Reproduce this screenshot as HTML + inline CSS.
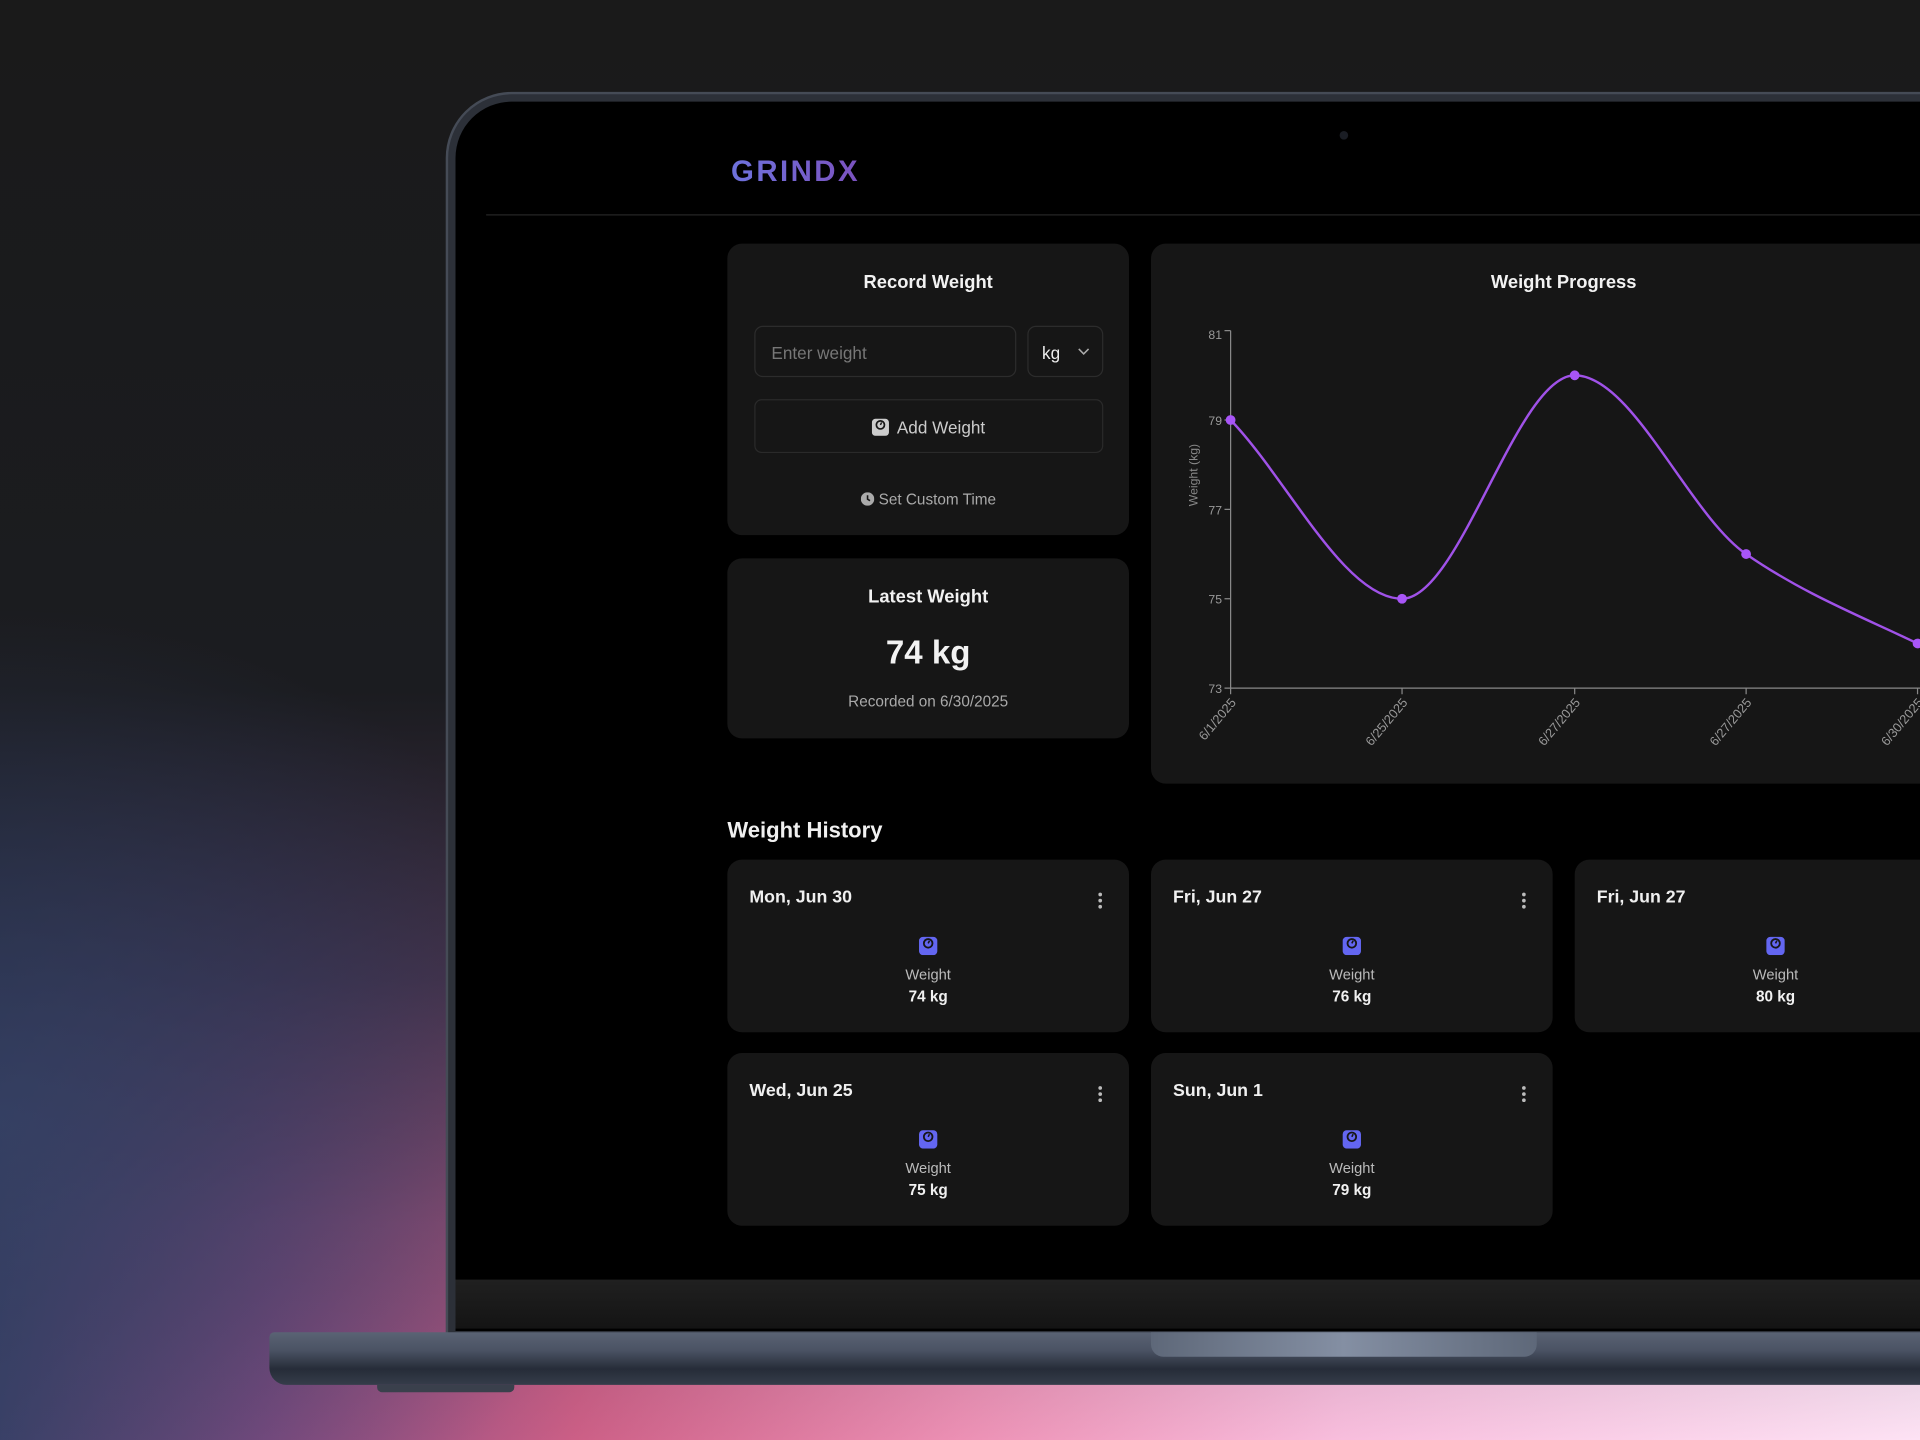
<!DOCTYPE html>
<html><head><meta charset="utf-8"><style>
*{margin:0;padding:0;box-sizing:border-box}
html,body{width:1920px;height:1440px;overflow:hidden;background:#1a1a1a;font-family:"Liberation Sans",sans-serif}
#w{position:absolute;left:0;top:0;width:1568px;height:1176px;transform:scale(1.22449);transform-origin:0 0;overflow:hidden;
background:radial-gradient(ellipse 500px 420px at 0% 78%,rgba(55,68,105,0.75),rgba(55,68,105,0)),linear-gradient(180deg,#1a1a1a 0%,#1b1c20 48%,rgba(30,34,50,0.75) 68%,rgba(30,34,50,0.25) 85%,rgba(30,32,48,0) 100%),linear-gradient(90deg,#3a3f66 0%,#7e4a80 14%,#cc5f86 30%,#ec90b4 50%,#f8bedd 70%,#fde2f4 100%)}
.a{position:absolute}
.card{position:absolute;background:#161616;border-radius:12px}
.t{position:absolute;color:#f2f2f2;font-weight:bold;text-align:center}
.hc .d{position:absolute;left:18px;top:23px;color:#f0f0f0;font-weight:bold;font-size:14.5px}
.hc .k{position:absolute;left:303px;top:27px;width:4px}
.hc .k i{display:block;width:3px;height:3px;border-radius:50%;background:#bbb;margin-bottom:2px}
.hc .ic{position:absolute;left:156px;top:62px}
.hc .l{position:absolute;left:0;width:100%;top:87px;text-align:center;color:#bbb;font-size:12px}
.hc .v{position:absolute;left:0;width:100%;top:105px;text-align:center;color:#f0f0f0;font-size:12.5px;font-weight:bold}
</style></head><body><div id="w">
<div class="a" style="left:364px;top:75px;width:1300px;height:1016px;border-radius:54px 54px 0 0;background:#2c3038;border:2px solid #454b56"></div>
<div class="a" style="left:372px;top:83px;width:1290px;height:1004px;border-radius:46px 46px 0 0;background:#000"></div>
<div class="a" style="left:372px;top:1045px;width:1290px;height:40px;background:linear-gradient(#202020,#141414)"></div>
<div class="a" style="left:1094px;top:107px;width:7px;height:7px;border-radius:50%;background:#1a1d24"></div>
<div class="a" style="left:220px;top:1088px;width:1400px;height:43px;border-radius:4px 0 0 14px;background:linear-gradient(180deg,#5a6374 0%,#4a5263 35%,#262c38 70%,#353c4a 100%)"></div>
<div class="a" style="left:940px;top:1088px;width:315px;height:20px;border-radius:0 0 10px 10px;background:linear-gradient(90deg,#5e6879,#848fa3 50%,#5e6879)"></div>
<div class="a" style="left:308px;top:1131px;width:112px;height:6px;background:#3a404c;border-radius:0 0 4px 4px"></div>
<div class="a" style="left:597px;top:127px;font-size:24px;font-weight:bold;letter-spacing:2px;background:linear-gradient(90deg,#6e72dc,#7b52bf);-webkit-background-clip:text;background-clip:text;color:transparent">GRINDX</div>
<div class="a" style="left:397px;top:175px;width:1200px;height:1px;background:#262626"></div>
<div class="card" style="left:594px;top:199px;width:328px;height:238px">
<div class="t" style="left:0;width:100%;top:23px;font-size:15px">Record Weight</div>
<div class="a" style="left:22px;top:67px;width:214px;height:42px;border:1px solid #2c2c2c;border-radius:7px;color:#777;font-size:14px;padding:13px 0 0 13px">Enter weight</div>
<div class="a" style="left:245px;top:67px;width:62px;height:42px;border:1px solid #2c2c2c;border-radius:7px;color:#eee;font-size:14px;padding:13px 0 0 11px">kg<svg style="position:absolute;left:40px;top:17px" width="10" height="6" viewBox="0 0 10 6"><path d="M1 1l4 4 4-4" fill="none" stroke="#aaa" stroke-width="1.3"/></svg></div>
<div class="a" style="left:22px;top:127px;width:285px;height:44px;border:1px solid #2a2a2a;border-radius:6px;color:#ccc;font-size:14px;text-align:center;padding-top:14px"><svg style="vertical-align:-2px;margin-right:6px" width="14" height="15" viewBox="0 0 14 15"><rect x="0" y="1" width="14" height="14" rx="3" fill="#ccc"/><circle cx="7" cy="6" r="4" fill="#161616"/><circle cx="7" cy="6" r="2.6" fill="#ccc"/><path d="M7 6l1-2" stroke="#161616" stroke-width="1.2"/></svg>Add Weight</div>
<div class="a" style="left:0;width:100%;top:202px;text-align:center;color:#aaa;font-size:12.5px"><svg style="vertical-align:-1px;margin-right:4px" width="11" height="11" viewBox="0 0 11 11"><circle cx="5.5" cy="5.5" r="5.5" fill="#aaa"/><path d="M5.5 2.5v3.2l2 1.2" stroke="#161616" stroke-width="1.3" fill="none"/></svg>Set Custom Time</div>
</div>
<div class="card" style="left:594px;top:456px;width:328px;height:147px">
<div class="t" style="left:0;width:100%;top:23px;font-size:15px">Latest Weight</div>
<div class="t" style="left:0;width:100%;top:62px;font-size:27px">74 kg</div>
<div class="a" style="left:0;width:100%;top:110px;text-align:center;color:#aaa;font-size:12.5px">Recorded on 6/30/2025</div>
</div>
<div class="card" style="left:940px;top:199px;width:680px;height:441px">
<div class="t" style="left:0;width:674px;top:23px;font-size:15px">Weight Progress</div>
</div>
<svg class="a" style="left:0;top:0" width="1568" height="1176" font-family="Liberation Sans,sans-serif">
<g stroke="#888" stroke-width="1" fill="none">
<path d="M1005 270V562H1568"/>
<path d="M1000 270h5M1000 343h5M1000 416h5M1000 489h5M1000 562h5M1005 562v5M1145 562v5M1286 562v5M1426 562v5M1566 562v5"/>
</g>
<g fill="#999" font-size="10" text-anchor="end">
<text x="998" y="277">81</text><text x="998" y="347">79</text><text x="998" y="420">77</text><text x="998" y="493">75</text><text x="998" y="566">73</text>
</g>
<text x="0" y="0" fill="#888" font-size="10" text-anchor="middle" transform="translate(978 388) rotate(-90)">Weight (kg)</text>
<g fill="#999" font-size="10.5" text-anchor="end">
<text transform="translate(1010 574) rotate(-50)">6/1/2025</text>
<text transform="translate(1150 574) rotate(-50)">6/25/2025</text>
<text transform="translate(1291 574) rotate(-50)">6/27/2025</text>
<text transform="translate(1431 574) rotate(-50)">6/27/2025</text>
<text transform="translate(1571 574) rotate(-50)">6/30/2025</text>
</g>
<path d="M1005,343 C1052,392 1098,489 1145,489 C1192,489 1239,306.5 1286,306.5 C1333,306.5 1379,420 1426,452.5 C1473,485 1519,503 1566,525.5" fill="none" stroke="#a052e8" stroke-width="2"/>
<g fill="#a855f7"><circle cx="1005" cy="343" r="4"/><circle cx="1145" cy="489" r="4"/><circle cx="1286" cy="306.5" r="4"/><circle cx="1426" cy="452.5" r="4"/><circle cx="1566" cy="525.5" r="4"/></g>
</svg>
<div class="a" style="left:594px;top:668px;color:#f0f0f0;font-size:18px;font-weight:bold">Weight History</div>
<div class="card hc" style="left:594px;top:702px;width:328px;height:141px"><div class="d">Mon, Jun 30</div><div class="k"><i></i><i></i><i></i></div><svg class="ic" width="16" height="16" viewBox="0 0 14 15"><rect x="0" y="1" width="14" height="14" rx="3" fill="#6366f1"/><circle cx="7" cy="6" r="4" fill="#161616"/><circle cx="7" cy="6" r="2.6" fill="#6366f1"/><path d="M7 6l1-2" stroke="#161616" stroke-width="1.2"/></svg><div class="l">Weight</div><div class="v">74 kg</div></div>
<div class="card hc" style="left:940px;top:702px;width:328px;height:141px"><div class="d">Fri, Jun 27</div><div class="k"><i></i><i></i><i></i></div><svg class="ic" width="16" height="16" viewBox="0 0 14 15"><rect x="0" y="1" width="14" height="14" rx="3" fill="#6366f1"/><circle cx="7" cy="6" r="4" fill="#161616"/><circle cx="7" cy="6" r="2.6" fill="#6366f1"/><path d="M7 6l1-2" stroke="#161616" stroke-width="1.2"/></svg><div class="l">Weight</div><div class="v">76 kg</div></div>
<div class="card hc" style="left:1286px;top:702px;width:328px;height:141px"><div class="d">Fri, Jun 27</div><div class="k"><i></i><i></i><i></i></div><svg class="ic" width="16" height="16" viewBox="0 0 14 15"><rect x="0" y="1" width="14" height="14" rx="3" fill="#6366f1"/><circle cx="7" cy="6" r="4" fill="#161616"/><circle cx="7" cy="6" r="2.6" fill="#6366f1"/><path d="M7 6l1-2" stroke="#161616" stroke-width="1.2"/></svg><div class="l">Weight</div><div class="v">80 kg</div></div>
<div class="card hc" style="left:594px;top:860px;width:328px;height:141px"><div class="d">Wed, Jun 25</div><div class="k"><i></i><i></i><i></i></div><svg class="ic" width="16" height="16" viewBox="0 0 14 15"><rect x="0" y="1" width="14" height="14" rx="3" fill="#6366f1"/><circle cx="7" cy="6" r="4" fill="#161616"/><circle cx="7" cy="6" r="2.6" fill="#6366f1"/><path d="M7 6l1-2" stroke="#161616" stroke-width="1.2"/></svg><div class="l">Weight</div><div class="v">75 kg</div></div>
<div class="card hc" style="left:940px;top:860px;width:328px;height:141px"><div class="d">Sun, Jun 1</div><div class="k"><i></i><i></i><i></i></div><svg class="ic" width="16" height="16" viewBox="0 0 14 15"><rect x="0" y="1" width="14" height="14" rx="3" fill="#6366f1"/><circle cx="7" cy="6" r="4" fill="#161616"/><circle cx="7" cy="6" r="2.6" fill="#6366f1"/><path d="M7 6l1-2" stroke="#161616" stroke-width="1.2"/></svg><div class="l">Weight</div><div class="v">79 kg</div></div>
</div></body></html>
